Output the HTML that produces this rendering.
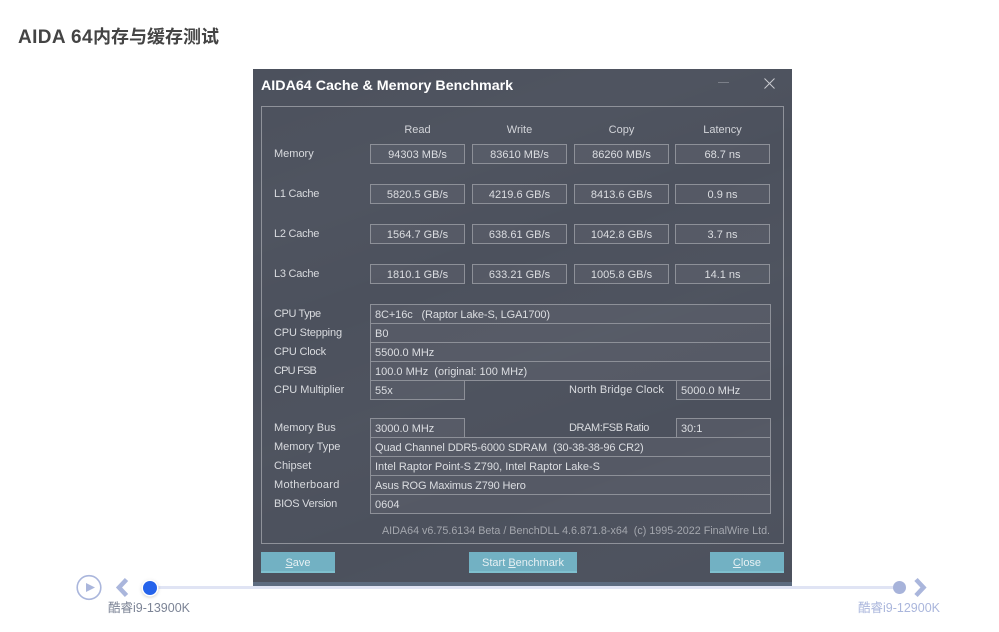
<!DOCTYPE html>
<html lang="zh">
<head>
<meta charset="utf-8">
<title>AIDA 64内存与缓存测试</title>
<style>
html,body{margin:0;padding:0;background:#fff}
#p{position:relative;width:999px;height:632px;overflow:hidden;background:#fff;font-family:"Liberation Sans","Noto Sans CJK SC",sans-serif}
#p div{position:absolute;box-sizing:border-box;white-space:nowrap}
.h{left:18px;top:26px;font-size:18px;line-height:22px;font-weight:bold;color:#444}
.w{left:253px;top:69px;width:539px;height:517px;background:
linear-gradient(160deg,rgba(255,255,255,0) 0,rgba(255,255,255,.018) 22%,rgba(255,255,255,0) 38%,rgba(255,255,255,.015) 55%,rgba(255,255,255,0) 72%,rgba(255,255,255,.012) 88%,rgba(255,255,255,0) 100%),#4c515d}
.s{left:253px;top:582px;width:539px;height:4px;background:#5d6c80}
.t{left:261px;top:77px;font-size:14.27px;line-height:18px;font-weight:bold;color:#fff}
.g{left:261px;top:106px;width:523px;height:438px;border:1px solid #8f929a}
.l{left:274px;font-size:11px;line-height:21px;color:#d9dbdf}
.c{font-size:11px;line-height:19px;color:#d2d4d9;text-align:center;top:121px;width:95px}
.b{height:20px;border:1px solid #8d9098;background:rgba(255,255,255,.05);font-size:11px;line-height:20px;color:#dcdee2;text-align:center;width:95px}
.f{left:370px;width:401px;height:20px;border:1px solid #8d9098;background:rgba(255,255,255,.05);font-size:11px;line-height:20px;color:#dcdee2;padding-left:4px}
.n{width:95px;padding-left:4px}
.x{left:472px;width:95px}.y{left:574px;width:95px}.z{left:675px;width:95px}.r{left:370px;width:95px}
.bt{top:552px;height:21px;background:#72b1c3;border-bottom:2px solid #7fc0cf;color:#e6f0f3;font-size:11px;line-height:22px;text-align:center}
.bt u{text-decoration:underline}
.ln{left:150px;top:586px;width:750px;height:3px;background:#e0e4f4}
.lb{font-size:12.5px;line-height:16px;top:600px}
</style>
</head>
<body>
<div id="p">
<div class="h"><span style="font-size:19px;letter-spacing:.4px">AIDA 64</span>内存与缓存测试</div>

<div class="ln"></div>
<div class="w"></div>
<div class="s"></div>
<div class="t">AIDA64 Cache &amp; Memory Benchmark</div>
<div style="left:718px;top:82px;width:11px;height:1px;background:#7b7f89"></div>
<svg style="position:absolute;left:763px;top:77px" width="13" height="13" viewBox="0 0 13 13"><path d="M1.500 1.500L11.500 11.500M11.500 1.500L1.500 11.500" stroke="#c9cbd0" stroke-width="1" fill="none"/></svg>
<div class="g"></div>

<div class="c" style="left:370px">Read</div>
<div class="c" style="left:472px">Write</div>
<div class="c" style="left:574px">Copy</div>
<div class="c" style="left:675px">Latency</div>

<div class="l" style="top:144px">Memory</div>
<div class="b r" style="top:144px">94303 MB/s</div>
<div class="b x" style="top:144px">83610 MB/s</div>
<div class="b y" style="top:144px">86260 MB/s</div>
<div class="b z" style="top:144px">68.7 ns</div>

<div class="l" style="top:184px;letter-spacing:-.25px">L1 Cache</div>
<div class="b r" style="top:184px">5820.5 GB/s</div>
<div class="b x" style="top:184px">4219.6 GB/s</div>
<div class="b y" style="top:184px">8413.6 GB/s</div>
<div class="b z" style="top:184px">0.9 ns</div>

<div class="l" style="top:224px;letter-spacing:-.25px">L2 Cache</div>
<div class="b r" style="top:224px">1564.7 GB/s</div>
<div class="b x" style="top:224px">638.61 GB/s</div>
<div class="b y" style="top:224px">1042.8 GB/s</div>
<div class="b z" style="top:224px">3.7 ns</div>

<div class="l" style="top:264px;letter-spacing:-.25px">L3 Cache</div>
<div class="b r" style="top:264px">1810.1 GB/s</div>
<div class="b x" style="top:264px">633.21 GB/s</div>
<div class="b y" style="top:264px">1005.8 GB/s</div>
<div class="b z" style="top:264px">14.1 ns</div>

<div class="l" style="top:304px;letter-spacing:-.4px">CPU Type</div>
<div class="f" style="top:304px;letter-spacing:-.1px">8C+16c&nbsp;&nbsp; (Raptor Lake-S, LGA1700)</div>
<div class="l" style="top:323px;letter-spacing:-.15px">CPU Stepping</div>
<div class="f" style="top:323px">B0</div>
<div class="l" style="top:342px;letter-spacing:-.2px">CPU Clock</div>
<div class="f" style="top:342px">5500.0 MHz</div>
<div class="l" style="top:361px;letter-spacing:-.8px">CPU FSB</div>
<div class="f" style="top:361px">100.0 MHz&nbsp; (original: 100 MHz)</div>
<div class="l" style="top:380px">CPU Multiplier</div>
<div class="f n" style="top:380px">55x</div>
<div class="l" style="top:380px;left:569px;letter-spacing:.15px">North Bridge Clock</div>
<div class="f n" style="top:380px;left:676px">5000.0 MHz</div>

<div class="l" style="top:418px">Memory Bus</div>
<div class="f n" style="top:418px">3000.0 MHz</div>
<div class="l" style="top:418px;left:569px;letter-spacing:-.4px">DRAM:FSB Ratio</div>
<div class="f n" style="top:418px;left:676px">30:1</div>
<div class="l" style="top:437px">Memory Type</div>
<div class="f" style="top:437px;letter-spacing:-.1px">Quad Channel DDR5-6000 SDRAM&nbsp; (30-38-38-96 CR2)</div>
<div class="l" style="top:456px">Chipset</div>
<div class="f" style="top:456px">Intel Raptor Point-S Z790, Intel Raptor Lake-S</div>
<div class="l" style="top:475px;letter-spacing:.3px">Motherboard</div>
<div class="f" style="top:475px;letter-spacing:-.15px">Asus ROG Maximus Z790 Hero</div>
<div class="l" style="top:494px;letter-spacing:-.25px">BIOS Version</div>
<div class="f" style="top:494px">0604</div>

<div style="left:382px;top:522px;font-size:10.75px;line-height:19px;color:#a4a7ae">AIDA64 v6.75.6134 Beta / BenchDLL 4.6.871.8-x64&nbsp; (c) 1995-2022 FinalWire Ltd.</div>

<div class="bt" style="left:261px;width:74px"><u>S</u>ave</div>
<div class="bt" style="left:469px;width:108px">Start <u>B</u>enchmark</div>
<div class="bt" style="left:710px;width:74px"><u>C</u>lose</div>

<svg style="position:absolute;left:76px;top:574px" width="27" height="27" viewBox="0 0 27 27"><circle cx="13" cy="13.500" r="11.800" fill="#fff" stroke="#aab6dc" stroke-width="1.600"/><path d="M10 9L19 13.500L10 18Z" fill="#aab6dc"/></svg>
<svg style="position:absolute;left:114px;top:576px" width="18" height="23" viewBox="0 0 18 23"><path d="M12.500 3.500L5 11.500L12.500 19.500" fill="none" stroke="#aab6dc" stroke-width="4.500"/></svg>
<div style="left:143px;top:581px;width:14px;height:14px;border-radius:50%;background:#2563eb;box-shadow:0 0 0 1.500px #fff,0 1px 4px rgba(0,0,0,.4)"></div>
<div class="lb" style="left:108px;color:#7c8496">酷睿i9-13900K</div>

<div style="left:893px;top:581px;width:13px;height:13px;border-radius:50%;background:#a7b3da"></div>
<svg style="position:absolute;left:911px;top:576px" width="18" height="23" viewBox="0 0 18 23"><path d="M5 3.500L12.500 11.500L5 19.500" fill="none" stroke="#aab6dc" stroke-width="4.500"/></svg>
<div class="lb" style="left:858px;color:#aab6dc">酷睿i9-12900K</div>
</div>
</body>
</html>
